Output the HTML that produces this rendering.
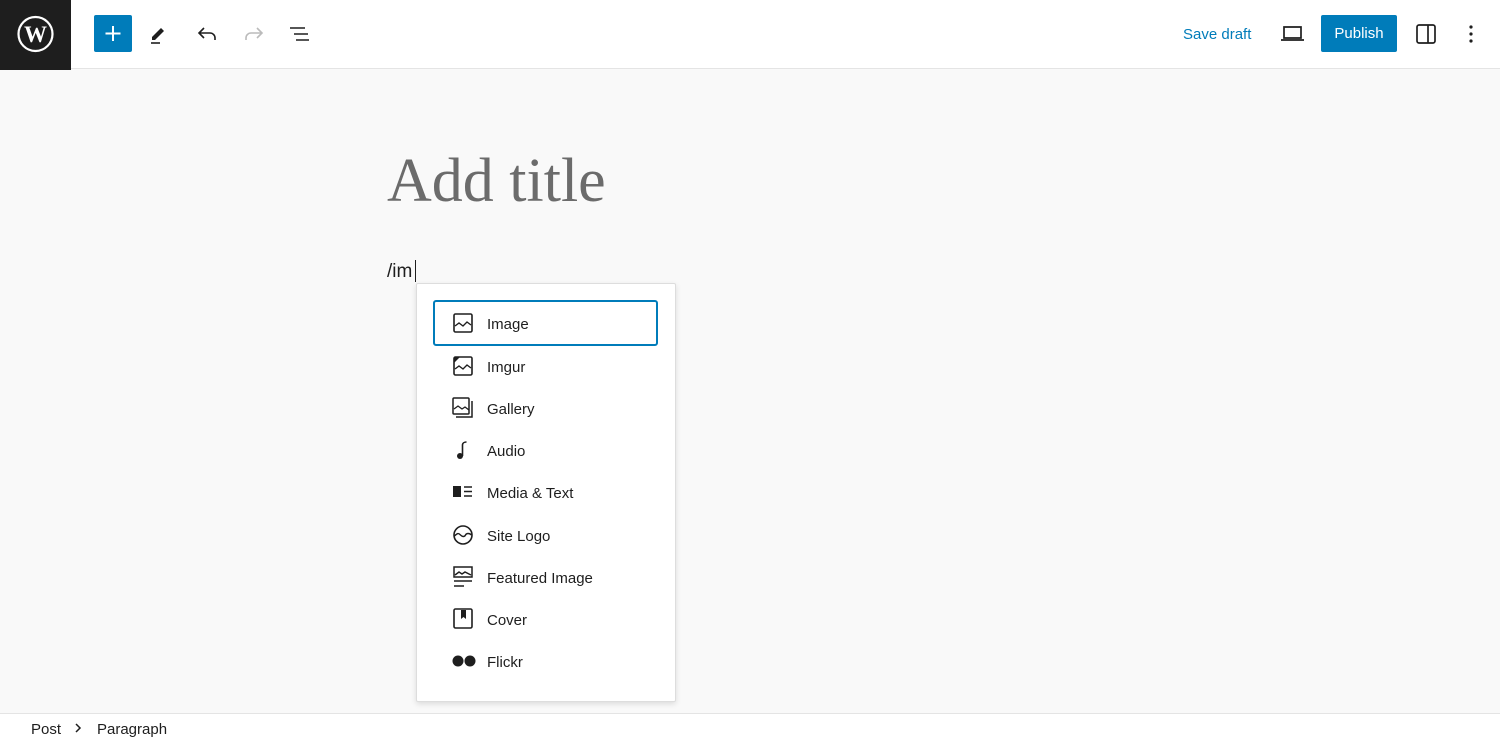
<!DOCTYPE html>
<html><head><meta charset="utf-8"><style>
*{box-sizing:border-box;margin:0;padding:0}
body{width:1500px;height:741px;overflow:hidden;background:#f9f9f9;font-family:"Liberation Sans",sans-serif;position:relative;color:#1e1e1e}
.top{position:absolute;left:0;top:0;width:1500px;height:69px;background:#fff;border-bottom:1px solid #e4e4e4}
.logo{position:absolute;left:0;top:0;width:71px;height:70px;background:#1e1e1e}
.abs{position:absolute}
.plus{left:94px;top:15px;width:38px;height:37px;background:#007cba;border-radius:2px}
.pub{left:1321px;top:15px;width:76px;height:37px;background:#007cba;border-radius:2px;color:#fff;font-size:15px;line-height:38px;text-align:center}
.save{left:1183px;top:26px;color:#007cba;font-size:15px}
.title{left:387px;top:146px;font-family:"Liberation Serif",serif;font-size:62px;color:#6b6b6b}
.para{left:387px;top:261px;font-size:19px;color:#1e1e1e}
.caret{left:415px;top:260px;width:1px;height:22px;background:#1e1e1e}
.pop{left:416px;top:283px;width:260px;height:419px;background:#fff;border:1px solid #ddd;box-shadow:0 2px 6px rgba(0,0,0,.12);border-radius:2px}
.item{position:absolute;left:16px;width:225px;height:46px;font-size:15px;line-height:50px}
.item span{position:absolute;left:54px}
.item svg{position:absolute;left:19px;top:12px}
.sel{border:2px solid #007cba;border-radius:3px}
.foot{position:absolute;left:0;top:713px;width:1500px;height:28px;background:#fff;border-top:1px solid #e4e4e4;font-size:15px}
</style></head><body>
<div class="top">
<div class="logo"><svg width="71" height="70" viewBox="0 0 71 70"><circle cx="35.5" cy="34" r="17" fill="none" stroke="#fff" stroke-width="2.2"/><text x="35.5" y="42" text-anchor="middle" fill="#fff" font-family="Liberation Serif" font-weight="bold" font-size="23">W</text></svg></div>
<div class="abs plus"><svg width="38" height="37"><path d="M19 11v15M11.5 18.5h15" stroke="#fff" stroke-width="2"/></svg></div>
<svg class="abs" style="left:147px;top:21px" width="26" height="26"><path d="M5 16l9-9 3 3-9 9H5z" fill="#1e1e1e"/><path d="M4 22h9" stroke="#1e1e1e" stroke-width="1.6"/></svg>
<svg class="abs" style="left:194px;top:21px" width="26" height="26"><path d="M6 12h10a5 5 0 015 5v2M10 7l-5 5 5 5" fill="none" stroke="#1e1e1e" stroke-width="1.6"/></svg>
<svg class="abs" style="left:241px;top:21px" width="26" height="26"><path d="M20 12H10a5 5 0 00-5 5v2M16 7l5 5-5 5" fill="none" stroke="#bbb" stroke-width="1.6"/></svg>
<svg class="abs" style="left:288px;top:21px" width="26" height="26"><path d="M2 7h15M6 13h14M8 19h13" stroke="#1e1e1e" stroke-width="1.6"/></svg>
<div class="abs save">Save draft</div>
<svg class="abs" style="left:1280px;top:22px" width="26" height="22"><path d="M4 5h17v11H4zM1 18h23" fill="none" stroke="#1e1e1e" stroke-width="1.7"/></svg>
<div class="abs pub">Publish</div>
<svg class="abs" style="left:1414px;top:22px" width="24" height="24"><rect x="3" y="3" width="18" height="18" rx="2" fill="none" stroke="#1e1e1e" stroke-width="1.7"/><path d="M14 3v18" stroke="#1e1e1e" stroke-width="1.7"/></svg>
<svg class="abs" style="left:1466px;top:22px" width="10" height="24"><circle cx="5" cy="5" r="1.6" fill="#1e1e1e"/><circle cx="5" cy="12" r="1.6" fill="#1e1e1e"/><circle cx="5" cy="19" r="1.6" fill="#1e1e1e"/></svg>
</div>
<div class="abs title">Add title</div>
<div class="abs para">/im</div>
<div class="abs caret"></div>
<div class="abs pop">
<div class="item sel" style="top:16px"><svg width="22" height="22" style="left:17px;top:10px"><rect x="2" y="2" width="18" height="18" rx="1.5" fill="none" stroke="#1e1e1e" stroke-width="1.6"/><path d="M3 14l4-3 4 3 4-4 4 3" fill="none" stroke="#1e1e1e" stroke-width="1.4"/></svg><span style="left:52px;line-height:46px">Image</span></div>
<div class="item" style="top:59px"><svg width="22" height="22"><rect x="2" y="2" width="18" height="18" rx="1.5" fill="none" stroke="#1e1e1e" stroke-width="1.6"/><path d="M2 2h6L2 8z" fill="#1e1e1e"/><path d="M3 14l4-3 4 3 4-4 4 3" fill="none" stroke="#1e1e1e" stroke-width="1.4"/></svg><span>Imgur</span></div>
<div class="item" style="top:101px"><svg width="22" height="22"><rect x="1" y="1" width="16" height="16" rx="1" fill="none" stroke="#1e1e1e" stroke-width="1.5"/><path d="M20 4v16H4" fill="none" stroke="#1e1e1e" stroke-width="1.5"/><path d="M2 12l4-3 4 3 3-2 4 3" fill="none" stroke="#1e1e1e" stroke-width="1.3"/></svg><span>Gallery</span></div>
<div class="item" style="top:143px"><svg width="22" height="22"><circle cx="8" cy="17" r="3" fill="#1e1e1e"/><path d="M10.5 17V6c0-2 2-3 4-3" fill="none" stroke="#1e1e1e" stroke-width="1.6"/></svg><span>Audio</span></div>
<div class="item" style="top:185px"><svg width="22" height="22"><rect x="1" y="5" width="8" height="11" fill="#1e1e1e"/><path d="M12 6h8M12 10.5h8M12 15h8" stroke="#1e1e1e" stroke-width="1.6"/></svg><span>Media &amp; Text</span></div>
<div class="item" style="top:228px"><svg width="22" height="22"><circle cx="11" cy="11" r="9" fill="none" stroke="#1e1e1e" stroke-width="1.6"/><path d="M2.5 12c3-3 4-3 6-1s4 2 5 0 4-2 6 0" fill="none" stroke="#1e1e1e" stroke-width="1.4"/></svg><span>Site Logo</span></div>
<div class="item" style="top:270px"><svg width="22" height="22"><rect x="2" y="1" width="18" height="10" fill="none" stroke="#1e1e1e" stroke-width="1.5"/><path d="M3 9l4-3 3 2 3-2 6 3M2 15h18M2 20h10" fill="none" stroke="#1e1e1e" stroke-width="1.5"/></svg><span>Featured Image</span></div>
<div class="item" style="top:312px"><svg width="22" height="22"><rect x="2" y="1" width="18" height="19" rx="1.5" fill="none" stroke="#1e1e1e" stroke-width="1.6"/><path d="M9 2h5v9l-2.5-2L9 11z" fill="#1e1e1e"/></svg><span>Cover</span></div>
<div class="item" style="top:354px"><svg width="26" height="22"><circle cx="6" cy="11" r="5.5" fill="#1e1e1e"/><circle cx="18" cy="11" r="5.5" fill="#1e1e1e"/></svg><span>Flickr</span></div>
</div>
<div class="foot"><span class="abs" style="left:31px;top:7px">Post</span><svg class="abs" style="left:73px;top:8px" width="10" height="12"><path d="M3 2l4 4-4 4" fill="none" stroke="#1e1e1e" stroke-width="1.5"/></svg><span class="abs" style="left:97px;top:7px">Paragraph</span></div>
</body></html>
